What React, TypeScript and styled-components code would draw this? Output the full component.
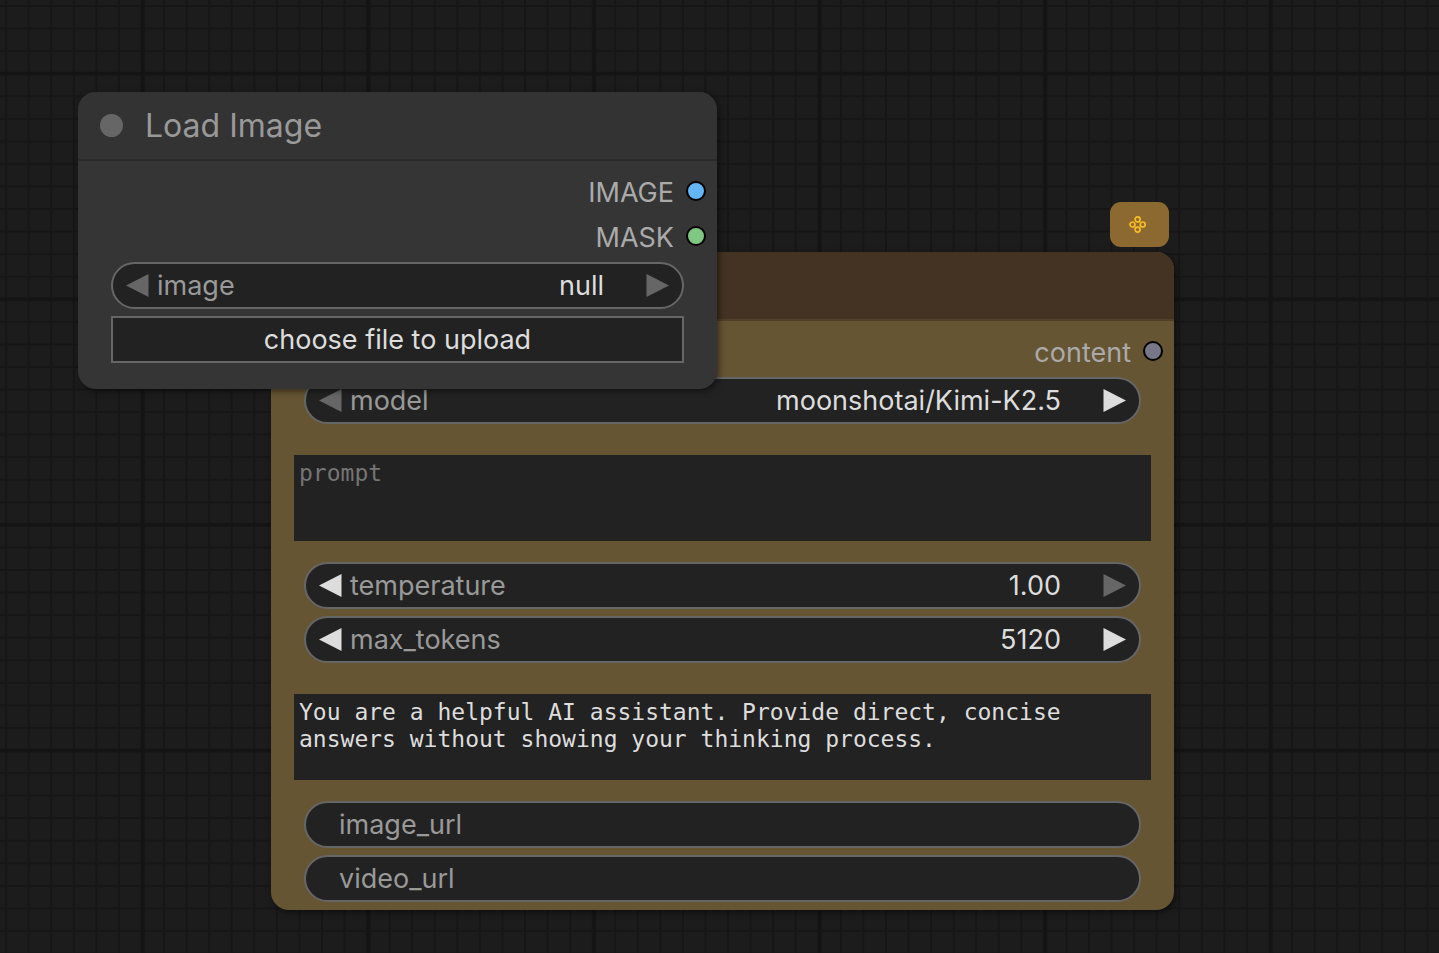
import React, { useId } from "react";
import styled, { createGlobalStyle } from "styled-components";

const GlobalStyle = createGlobalStyle`
  * {
    box-sizing: border-box;
  }
  body {
    margin: 0;
    background: #1c1c1c;
    font-family: Inter, "Liberation Sans", sans-serif;
    font-size: 27px;
  }
  button, input, select, textarea {
    font: inherit;
    margin: 0;
    border: 0;
    border-radius: 0;
    outline: none;
  }
`;

const Canvas = styled.main`
  position: relative;
  min-height: 100vh;
  overflow: hidden;
`;

const GridSvg = styled.svg`
  position: absolute;
  inset: 0;
  width: 100%;
  height: 100%;
`;

const NodeCard = styled.section<{ $x: number; $y: number; $width: number; $body: string }>`
  position: absolute;
  left: ${(p) => p.$x}px;
  top: ${(p) => p.$y}px;
  width: ${(p) => p.$width}px;
  border-radius: 18px;
  background: ${(p) => p.$body};
  box-shadow: 2px 2px 6px rgba(0, 0, 0, 0.5);
`;

const NodeHeader = styled.header<{ $color: string; $line: string }>`
  display: flex;
  align-items: center;
  gap: 22px;
  height: 69px;
  padding: 0 22px;
  border-radius: 18px 18px 0 0;
  border-bottom: 2px solid ${(p) => p.$line};
  background: ${(p) => p.$color};
`;

const CollapseDot = styled.button`
  width: 23px;
  height: 23px;
  padding: 0;
  border-radius: 50%;
  background: #666;
`;

const NodeTitle = styled.h2`
  margin: 0;
  color: #999;
  font-size: 32px;
  font-weight: 400;
  line-height: 40px;
`;

const Outputs = styled.ul`
  list-style: none;
  margin: 0;
  padding: 7px 11px 4px;
`;

const OutputRow = styled.li`
  display: flex;
  align-items: center;
  justify-content: flex-end;
  gap: 12px;
  height: 45px;
  color: #aaa;
`;

const OutputName = styled.span`
  padding-top: 3px;
`;

const SlotDot = styled.span<{ $color: string }>`
  width: 20px;
  height: 20px;
  border: 2px solid #000;
  border-radius: 50%;
  background: ${(p) => p.$color};
`;

const Widgets = styled.div<{ $bottom: number }>`
  display: flex;
  flex-direction: column;
  gap: 7px;
  padding: 0 33px ${(p) => p.$bottom}px;
`;

const Pill = styled.div<{ $plain?: boolean }>`
  display: flex;
  align-items: center;
  height: 47px;
  padding: 0 ${(p) => (p.$plain ? 33 : 13)}px;
  border: 2px solid #666;
  border-radius: 24px;
  background: #222;
`;

const WidgetLabel = styled.label`
  color: #999;
  line-height: 33px;
`;

const ArrowButton = styled.button<{ $dim?: boolean }>`
  flex: none;
  display: flex;
  width: 23px;
  height: 23px;
  padding: 0;
  background: none;
  color: ${(p) => (p.$dim ? "#666" : "#ddd")};
  svg {
    width: 23px;
    height: 23px;
    fill: currentColor;
  }
  & + ${WidgetLabel} {
    margin-left: 8px;
  }
`;

const ValueInput = styled.input`
  flex: 1;
  min-width: 0;
  height: 33px;
  padding: 0;
  margin-right: 42px;
  background: none;
  color: #ddd;
  text-align: right;
`;

const ValueSelect = styled.select`
  appearance: none;
  flex: 1;
  min-width: 0;
  height: 33px;
  padding: 0;
  margin-right: 42px;
  background: none;
  color: #ddd;
  text-align: right;
  text-align-last: right;
`;

const UploadButton = styled.button`
  height: 47px;
  padding: 0;
  border: 2px solid #666;
  background: #222;
  color: #ddd;
`;

const TextBox = styled.textarea`
  display: block;
  height: 86px;
  margin: 24px -10px 14px;
  padding: 5px;
  resize: none;
  overflow: hidden;
  background: #222;
  color: #ddd;
  font-family: "DejaVu Sans Mono", "Liberation Mono", monospace;
  font-size: 23px;
  line-height: 27px;
  &::placeholder {
    color: #757575;
    opacity: 1;
  }
`;

const Badge = styled.div`
  position: absolute;
  right: 5px;
  bottom: calc(100% + 5px);
  display: flex;
  align-items: center;
  justify-content: center;
  width: 59px;
  height: 45px;
  padding-right: 3px;
  border-radius: 11px;
  background: #8d6932;
`;

function CanvasGrid() {
  return (
    <GridSvg aria-hidden="true">
      <defs>
        <pattern id="minor" x="140.5" y="72.7" width="22.56" height="22.56" patternUnits="userSpaceOnUse">
          <path d="M0 1H22.56M1 0V22.56" stroke="#161616" strokeWidth="2" />
        </pattern>
        <pattern id="major" x="141.2" y="71.8" width="225.6" height="225.6" patternUnits="userSpaceOnUse">
          <path d="M0 1.9H225.6M1.9 0V225.6" stroke="#141414" strokeWidth="3.8" />
        </pattern>
      </defs>
      <rect width="100%" height="100%" fill="url(#minor)" />
      <rect width="100%" height="100%" fill="url(#major)" />
    </GridSvg>
  );
}

function Arrow({ side, dim, name }: { side: "left" | "right"; dim?: boolean; name: string }) {
  return (
    <ArrowButton type="button" $dim={dim} aria-label={`${side === "left" ? "Previous" : "Next"} ${name}`}>
      <svg viewBox="0 0 23 23" aria-hidden="true">
        <path d={side === "left" ? "M22.5 0V23L0 11.5Z" : "M0.5 0V23L23 11.5Z"} />
      </svg>
    </ArrowButton>
  );
}

interface StepperProps {
  name: string;
  value: string;
  choice?: boolean;
  dimLeft?: boolean;
  dimRight?: boolean;
}

function Stepper({ name, value, choice, dimLeft, dimRight }: StepperProps) {
  const id = useId();
  return (
    <Pill>
      <Arrow side="left" dim={dimLeft} name={name} />
      <WidgetLabel htmlFor={id}>{name}</WidgetLabel>
      {choice ? (
        <ValueSelect id={id} defaultValue={value}>
          <option>{value}</option>
        </ValueSelect>
      ) : (
        <ValueInput id={id} inputMode="decimal" defaultValue={value} />
      )}
      <Arrow side="right" dim={dimRight} name={name} />
    </Pill>
  );
}

function TextField({ name }: { name: string }) {
  const id = useId();
  return (
    <Pill $plain>
      <WidgetLabel htmlFor={id}>{name}</WidgetLabel>
      <ValueInput id={id} defaultValue="" />
    </Pill>
  );
}

function Output({ name, color }: { name: string; color: string }) {
  return (
    <OutputRow>
      <OutputName>{name}</OutputName>
      <SlotDot $color={color} />
    </OutputRow>
  );
}

export default function App() {
  return (
    <>
      <GlobalStyle />
      <Canvas>
        <CanvasGrid />

        <NodeCard $x={271} $y={252} $width={903} $body="#653" aria-label="Chat model">
          <Badge>
            <svg width="18" height="18" viewBox="0 0 18 18" fill="none" stroke="#fabc25" strokeWidth="1.7" aria-hidden="true">
              <circle cx="8.6" cy="3.4" r="2.5" />
              <circle cx="3.5" cy="8.5" r="2.5" />
              <circle cx="13.7" cy="8.5" r="2.5" />
              <circle cx="8.6" cy="13.6" r="2.5" />
            </svg>
          </Badge>
          <NodeHeader $color="#432" $line="#51402a" />
          <Outputs>
            <Output name="content" color="#778" />
          </Outputs>
          <Widgets $bottom={8}>
            <Stepper name="model" value="moonshotai/Kimi-K2.5" choice dimLeft />
            <TextBox placeholder="prompt" aria-label="prompt" spellCheck={false} />
            <Stepper name="temperature" value="1.00" dimRight />
            <Stepper name="max_tokens" value="5120" />
            <TextBox
              aria-label="system prompt"
              spellCheck={false}
              defaultValue="You are a helpful AI assistant. Provide direct, concise answers without showing your thinking process."
            />
            <TextField name="image_url" />
            <TextField name="video_url" />
          </Widgets>
        </NodeCard>

        <NodeCard $x={78} $y={92} $width={639} $body="#353535" aria-label="Load Image">
          <NodeHeader $color="#333" $line="#2a2a2a">
            <CollapseDot type="button" aria-label="Collapse node" />
            <NodeTitle>Load Image</NodeTitle>
          </NodeHeader>
          <Outputs>
            <Output name="IMAGE" color="#64b5f6" />
            <Output name="MASK" color="#81c784" />
          </Outputs>
          <Widgets $bottom={26}>
            <Stepper name="image" value="null" choice dimLeft dimRight />
            <UploadButton type="button">choose file to upload</UploadButton>
          </Widgets>
        </NodeCard>
      </Canvas>
    </>
  );
}
